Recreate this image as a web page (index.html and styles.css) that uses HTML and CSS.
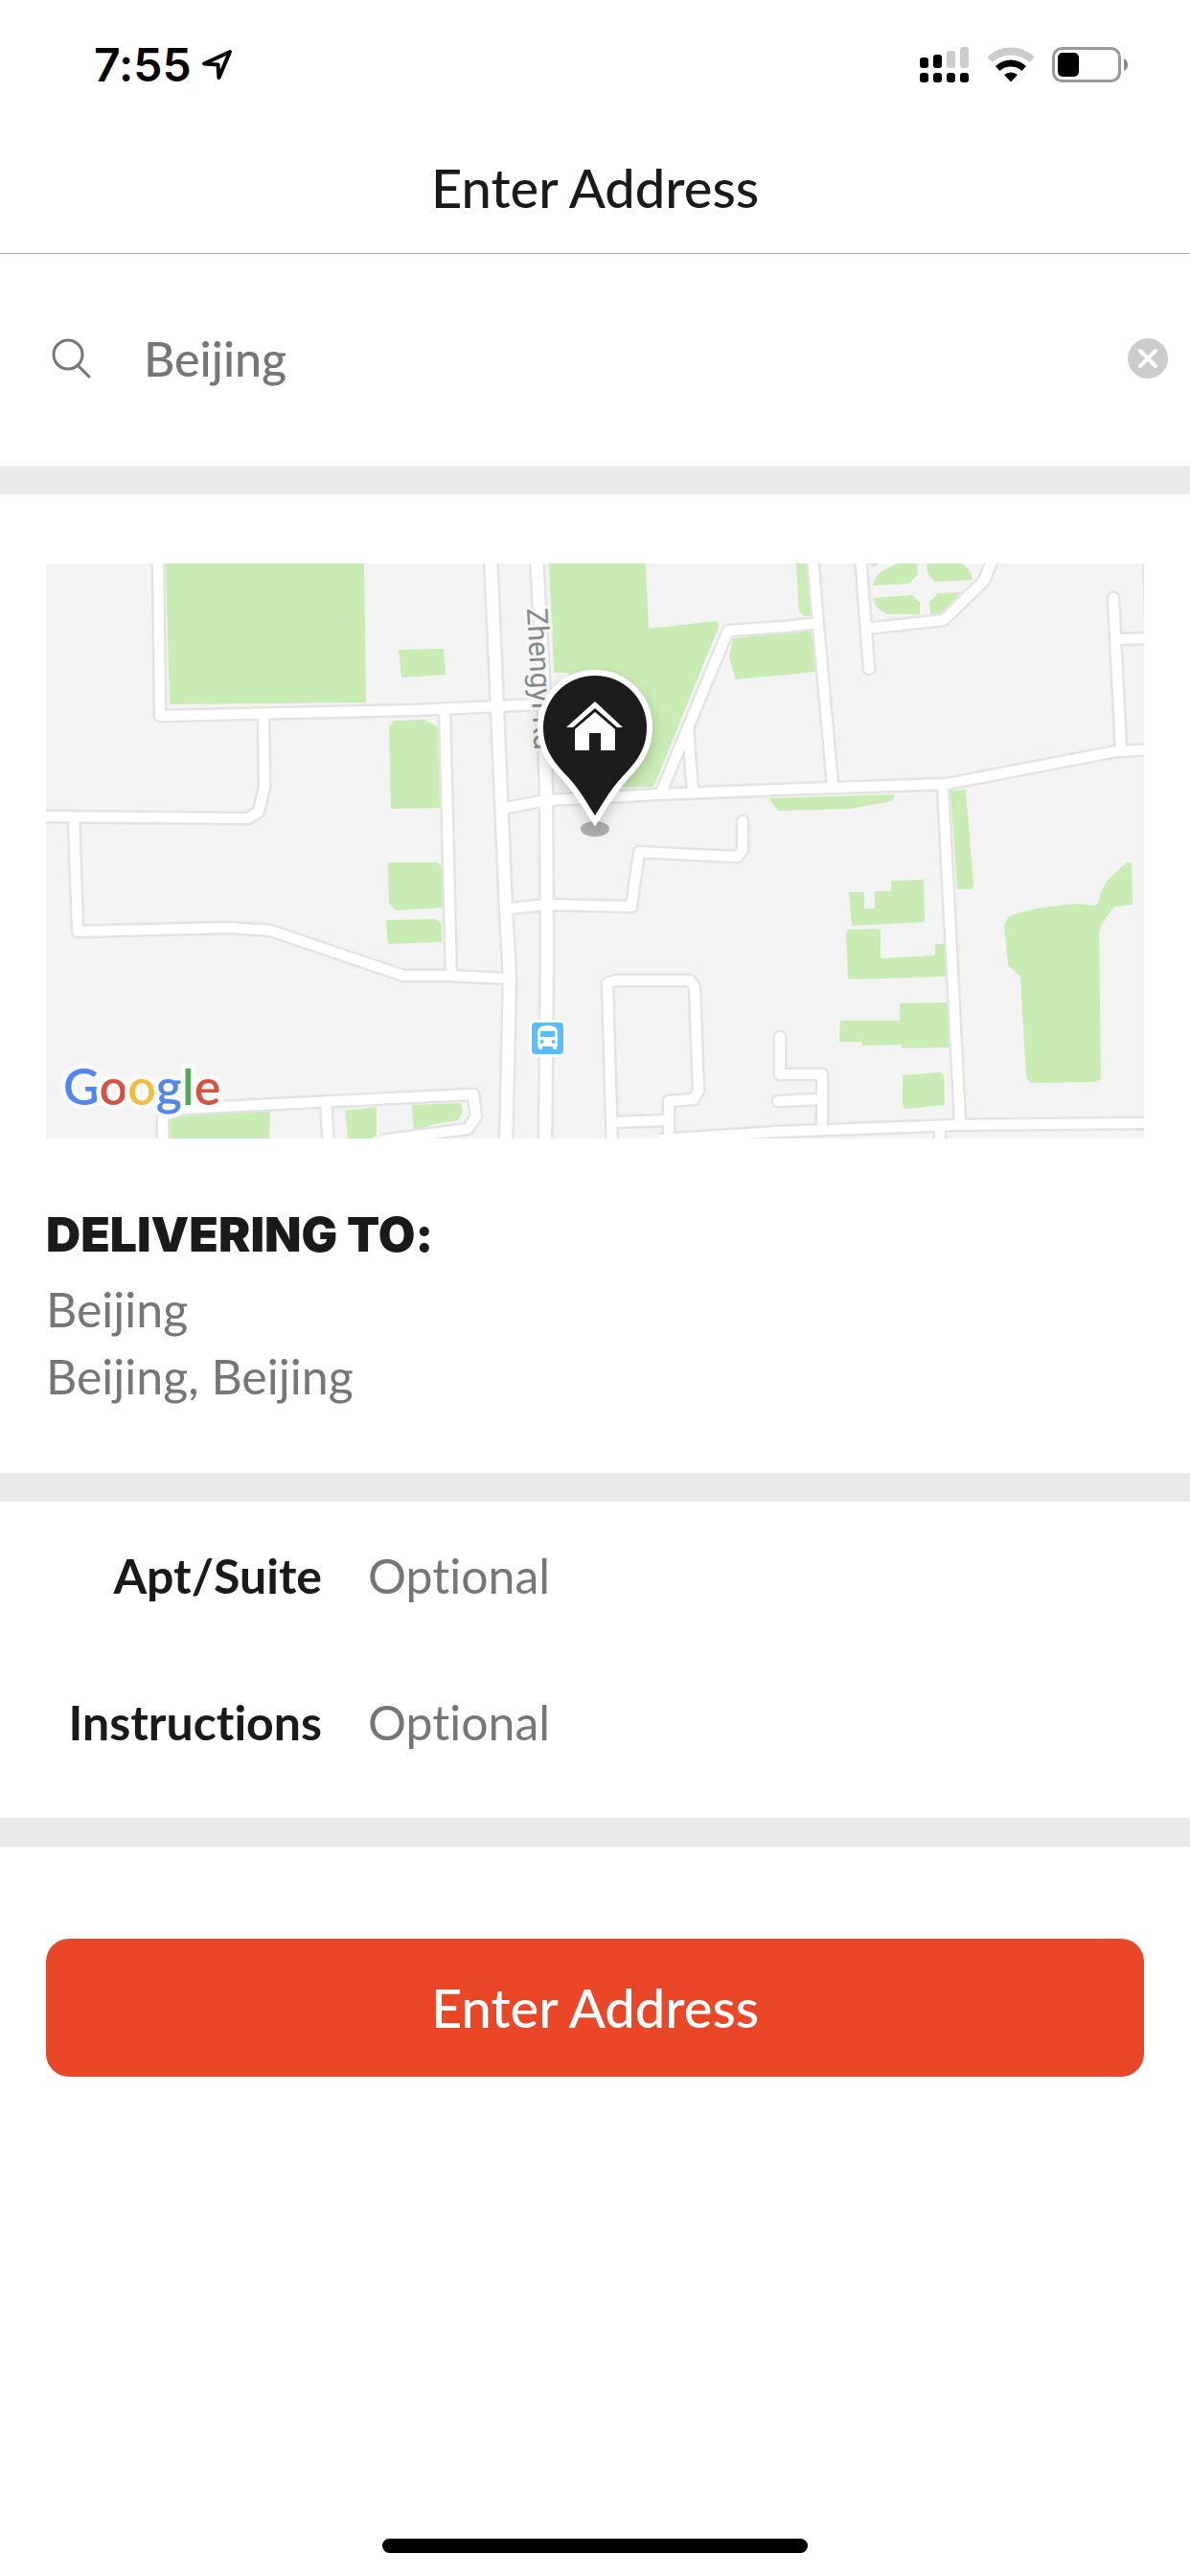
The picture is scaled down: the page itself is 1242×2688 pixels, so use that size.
FILE: index.html
```html
<!DOCTYPE html>
<html lang="en">
<head>
<meta charset="utf-8">
<meta name="viewport" content="width=device-width, initial-scale=1">
<title>Enter Address</title>
<link rel="stylesheet" href="styles.css">
</head>
<body>
<div class="status">
  <div class="status-time">
    <span>7:55</span>
    <svg width="34" height="34" viewBox="0 0 34 34" aria-hidden="true"><path d="M30 3L3 15.500L17.500 16.500L18.500 30Z" fill="none" stroke="#000" stroke-width="4" stroke-linejoin="round"/></svg>
  </div>
  <div class="status-icons">
    <svg width="52" height="38" viewBox="0 0 52 38" aria-hidden="true">
      <rect x="0" y="11" width="9" height="11" rx="3"/><rect x="14" y="8" width="9" height="14" rx="3"/>
      <rect x="28" y="4" width="9" height="18" rx="3" fill="#ccc"/><rect x="42" y="0" width="9" height="22" rx="3" fill="#ccc"/>
      <rect x="0" y="27" width="9" height="10" rx="3"/><rect x="14" y="27" width="9" height="10" rx="3"/><rect x="28" y="27" width="9" height="10" rx="3"/><rect x="42" y="27" width="9" height="10" rx="3"/>
    </svg>
    <svg width="50" height="38" viewBox="0 0 50 38" aria-hidden="true">
      <path d="M0.500 11Q1 10 2 9A35 35 0 0 1 48 9Q49 10 49.500 11L44.500 16A29 29 0 0 0 5.500 16Z" fill="#ccc"/>
      <path d="M9 20A23 23 0 0 1 41 20L36.500 25A17 17 0 0 0 13.500 25Z"/>
      <path d="M18 29A11 11 0 0 1 32 29L25 36.500Z"/>
    </svg>
    <svg width="80" height="38" viewBox="0 0 80 38" aria-hidden="true">
      <rect x="1.500" y="1.500" width="69" height="34" rx="9" fill="none" stroke="#999" stroke-width="3"/>
      <rect x="6" y="6" width="22" height="25" rx="5"/>
      <path d="M75 12Q79 14 79 18.500T75 25Z" fill="#888"/>
    </svg>
  </div>
</div>

<header class="header"><h1>Enter Address</h1></header>

<main>
  <form class="form">
    <div class="search">
      <svg class="search-icon" width="42" height="44" viewBox="0 0 42 44" aria-hidden="true"><g fill="none" stroke="#767676" stroke-width="3" stroke-linecap="round"><circle cx="17" cy="18" r="15"/><path d="M27 29L39 41"/></g></svg>
      <input class="search-input" type="text" aria-label="Search address" value="Beijing">
      <button class="clear" type="button" aria-label="Clear"><svg width="42" height="42" viewBox="0 0 42 42"><circle cx="21" cy="21" r="21" fill="#ccc"/><path d="M13 13L29 29M29 13L13 29" stroke="#fff" stroke-width="4" stroke-linecap="round"/></svg></button>
    </div>

    <section class="place">
      <svg class="map" viewBox="0 0 1146 600" role="img" aria-label="Map of the delivery address">
        <defs>
          <g id="lanes" stroke-linejoin="round" fill="none">
            <path d="M117 -9L119 159L382 153L515 147"/>
            <path d="M227 159L228 233L222 259L211 266L-9 264"/>
            <path d="M29 264L33 384L192 380L234 383L373 430H419L479 433"/>
            <path d="M122 610V570L382 557L446 554L449 577L440 590L350 602"/>
            <path d="M292 560L295 610"/>
            <path d="M416 151L423 430"/>
            <path d="M480 255L522 247L639 241L762 236L940 230L1117 196L1156 194"/>
            <path d="M484 360L522 356L611 358L619 301L722 306L727 299V269" stroke-linecap="round"/>
            <path d="M642 239L712 70L772 66L805 62"/>
            <path d="M670 171L675 239"/>
            <path d="M591 610L586 438L595 435H672L677 442L681 550L676 559L650 561V610"/>
            <path d="M591 583L650 581"/>
            <path d="M640 601L762 593L949 586L1156 584"/>
            <path d="M954 585L953 563L936 231"/>
            <path d="M800 -9L806 64L821 231"/>
            <path d="M850 -9L859 110" stroke-linecap="round"/>
            <path d="M855 68L937 59L979 18L990 -9"/>
            <path d="M1114 36L1122 195" stroke-linecap="round"/>
            <path d="M1116 79L1156 78"/>
            <path d="M1151 -9L1154 70"/>
            <path d="M766 494V533H810V588" stroke-linecap="round"/>
            <path d="M764 561L810 559" stroke-linecap="round"/>
            <path d="M933 588V610"/>
          </g>
          <g id="avenues" stroke-linejoin="round" fill="none">
            <path d="M464 -9L471 151L480 360L484 432L480 610"/>
            <path d="M512 -9L519 123L522 243L523 404L521 610"/>
          </g>
          <filter id="shade" x="-30%" y="-30%" width="160%" height="160%"><feDropShadow dx="0" dy="6" stdDeviation="7" flood-opacity=".2"/></filter>
        </defs>
        <rect width="1146" height="600" fill="#f3f3f3"/>
        <g fill="#c9ebb4">
          <path d="M125 0H332L334 145L129 147Z"/>
          <path d="M368 90L415 89L417 116L371 119Z"/>
          <path d="M358 171L363 164L395 163L409 171L411 255L360 256Z"/>
          <path d="M357 312H409L413 316L414 359L365 362L358 354Z"/>
          <path d="M355 372L405 371L413 375V395L357 397Z"/>
          <path d="M128 573L234 571L233 600H130Z"/>
          <path d="M312 571L345 567V597L338 600H315Z"/>
          <path d="M382 565L433 563L435 572L430 581L405 585L384 592Z"/>
          <path d="M525 0H626L629 68L700 60L703 64L635 231L632 233L572 234L545 114H530Z"/>
          <path d="M717 78L799 70L803 113L762 117L720 121L713 98Z"/>
          <path d="M783 0H794L798 54L792 55L786 51Z"/>
          <path d="M863 23Q864 8 890 0H909L910 11L901 21Z"/>
          <path d="M919 0H955Q966 6 967 17L928 19L920 11Z"/>
          <path d="M863 36L904 33L912 41V53H879Q865 48 863 36Z"/>
          <path d="M922 40L931 31L955 30L934 52L923 53Z"/>
          <path d="M860 0H869L864 4Z"/>
          <path d="M754 245L884 241L886 244L882 248L839 256L764 258Z"/>
          <path d="M944 237L960 236L968 335L966 340H951Z"/>
          <path d="M838 343H854V360H865V342H882V331L916 330L917 374L841 378Z"/>
          <path d="M835 385L838 382L869 381L871 384V412L928 409V397H937L940 431L839 434L837 432Z"/>
          <path d="M829 477H891V459L941 458L943 505L893 506V502L852 503V499H828Z"/>
          <path d="M894 534L934 531L937 534L938 565L897 569L894 567Z"/>
          <path d="M1000 378L1004 369Q1029 358 1079 355L1092 357L1098 355Q1101 340 1109 329L1128 312H1133L1134 356L1115 358Q1102 374 1099 384L1101 538L1095 541L1027 542L1023 536L1017 431L1004 419Z"/>
        </g>
        <g stroke="#e3e3e3">
          <use href="#lanes" stroke-width="15"/><use href="#avenues" stroke-width="17"/>
        </g>
        <g stroke="#fff">
          <use href="#lanes" stroke-width="10"/><use href="#avenues" stroke-width="12"/>
        </g>
        <text class="map-road" transform="translate(502 47) rotate(87)">Zhengyi Rd</text>
        <g>
          <rect x="504" y="476" width="38" height="39" rx="6" fill="#fff"/>
          <rect x="507" y="479" width="33" height="33" rx="4" fill="#5bbcfc"/>
          <path d="M513 488Q514 482 523.500 482T534 488V504H533V507H529V504H518V507H514V504H513Z" fill="#fff"/>
          <path d="M516 488H531V494H516Z" fill="#5bbcfc"/>
          <circle cx="517.500" cy="499" r="2" fill="#5bbcfc"/><circle cx="529.500" cy="499" r="2" fill="#5bbcfc"/>
        </g>
        <text class="map-brand" x="18" y="565"><tspan fill="#5186ec">G</tspan><tspan fill="#d85140">o</tspan><tspan fill="#f1be42">o</tspan><tspan fill="#5186ec">g</tspan><tspan fill="#58a55c">l</tspan><tspan fill="#d85140">e</tspan></text>
        <ellipse cx="573" cy="277" rx="15" ry="8" fill="#adadad"/>
        <path filter="url(#shade)" d="M573 263C563 247 556 235 545 223C534 211 519 197 519 171A54 54 0 0 1 627 171C627 197 612 211 601 223C590 235 583 247 573 263Z" fill="#1a1a1a" stroke="#fff" stroke-width="12" paint-order="stroke"/>
        <path d="M573 144L602 171H596L573 151L550 171H543Z" fill="#fff"/>
        <path d="M573 155L594 173V195H579V177H567V195H552V173Z" fill="#fff"/>
      </svg>
      <h2>DELIVERING TO:</h2>
      <p>Beijing</p>
      <p>Beijing, Beijing</p>
    </section>

    <section class="fields">
      <div class="field"><label for="apt">Apt/Suite</label><input id="apt" type="text" placeholder="Optional"></div>
      <div class="field"><label for="notes">Instructions</label><input id="notes" type="text" placeholder="Optional"></div>
    </section>

    <div class="actions"><button class="submit" type="submit">Enter Address</button></div>
  </form>
</main>
<div class="home-bar"></div>
</body>
</html>
```
FILE: styles.css
```css
* { box-sizing: border-box; }

body {
  margin: 0;
  min-height: 100vh;
  display: flex;
  flex-direction: column;
  background: #fff;
  color: #1a1a1a;
  font-family: Lato, "Open Sans", sans-serif;
  font-size: 50px;
  font-variant-ligatures: none;
  line-height: 70px;
}

h1, h2, p { margin: 0; }

input, button {
  border: 0;
  padding: 0;
  background: none;
  font: inherit;
  color: inherit;
}

input { min-width: 0; flex: 1; outline: none; }

.status {
  height: 128px;
  padding: 8px 64px 0 98px;
  display: flex;
  align-items: center;
  justify-content: space-between;
}

.status-time {
  display: flex;
  align-items: center;
  gap: 10px;
  color: #000;
  font-family: Inter, sans-serif;
  font-size: 48px;
  font-weight: 600;
}

.status-icons { display: flex; gap: 18px; }

.header {
  height: 137px;
  display: flex;
  align-items: center;
  justify-content: center;
  border-bottom: 1px solid #b2b2b2;
}

.header h1 {
  font-size: 56px;
  font-weight: 500;
}

.search {
  display: flex;
  align-items: center;
  padding: 72px 23px 75px 54px;
  color: #767676;
}

.search-icon { margin-right: 54px; }

.search-input { height: 74px; font-weight: 500; }

.clear { display: flex; }

.place {
  border-top: 30px solid #eaeaea;
  padding: 72px 48px 66px;
  color: #767676;
}

.map {
  display: block;
  width: 100%;
  margin-bottom: 65px;
}

.map-road {
  font: 30px Roboto, sans-serif;
  fill: #84898a;
  stroke: #f7f7f7;
  stroke-width: 6px;
  paint-order: stroke;
}

.map-brand {
  font: 600 52px Lato, sans-serif;
  stroke: #fafafa;
  stroke-width: 10px;
  stroke-linejoin: round;
  paint-order: stroke;
}

.place h2 {
  margin-bottom: 8px;
  color: #1a1a1a;
  font-family: Inter, sans-serif;
  font-size: 50px;
  font-weight: 900;
}

.fields {
  border: solid #eaeaea;
  border-width: 30px 0;
  padding-bottom: 24px;
}

.field {
  display: flex;
  align-items: center;
  gap: 48px;
  height: 153px;
  padding-right: 48px;
}

.field label {
  width: 336px;
  text-align: right;
  font-weight: 700;
}

.field input::placeholder { color: #767676; opacity: 1; }

.actions { padding: 96px 48px; }

.submit {
  width: 100%;
  height: 144px;
  border-radius: 24px;
  background: #ea4628;
  color: #fff;
  font-size: 56px;
  font-weight: 500;
}

.home-bar {
  width: 444px;
  height: 15px;
  margin: auto auto 24px;
  border-radius: 8px;
  background: #000;
}
```
